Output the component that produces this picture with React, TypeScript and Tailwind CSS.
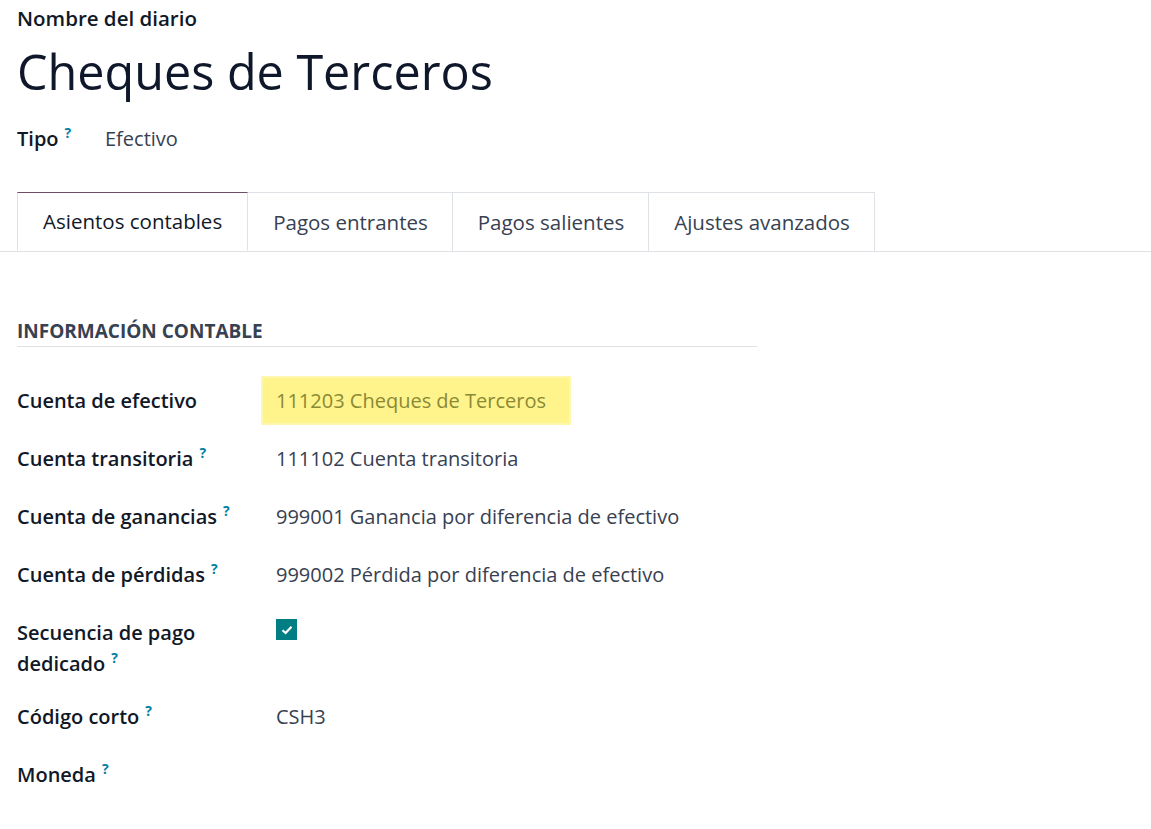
import React from 'react'

const font = { fontFamily: '"Open Sans", "Noto Sans", sans-serif' }

function Help() {
  return <sup className="ml-[6px] text-[14px] font-bold text-[#0180a5] relative -top-[8px]">?</sup>
}

const tabs = ['Asientos contables', 'Pagos entrantes', 'Pagos salientes', 'Ajustes avanzados']

interface RowProps {
  label: React.ReactNode
  help?: boolean
  children?: React.ReactNode
}

function Row({ label, help, children }: RowProps) {
  return (
    <div className="flex items-start min-h-[58px]">
      <div className="w-[259px] shrink-0 pr-4 text-[20px] leading-[31px] font-semibold text-[#111827]">
        {label}
        {help && <Help />}
      </div>
      <div className="flex-1 text-[20px] leading-[31px] text-[#374151]">{children}</div>
    </div>
  )
}

export default function App() {
  return (
    <div className="w-[1151px] h-[829px] bg-white overflow-hidden text-[#111827]" style={font}>
      <div className="pl-[17px] pt-[3px]">
        <div className="text-[20.5px] leading-[30px] font-semibold">Nombre del diario</div>
        <div className="text-[48.5px] leading-[68px] mt-[4px] text-[#0f172a]">Cheques de Terceros</div>
        <div className="flex items-center mt-[18px] h-[31px]">
          <div className="w-[88px] text-[20px] font-semibold">
            Tipo<Help />
          </div>
          <div className="text-[20px] text-[#374151]">Efectivo</div>
        </div>
      </div>

      {/* Tabs */}
      <div className="mt-[38px] flex border-b border-[#dee2e6] pl-[17px]">
        {tabs.map((t, i) => (
          <div
            key={t}
            className={
              i === 0
                ? 'h-[59px] px-[25px] flex items-center text-[20.5px] text-[#111827] bg-white border border-[#dee2e6] border-t-[#714b67] border-b-white -mb-px'
                : 'h-[59px] pl-[25px] pr-[24px] flex items-center text-[20.5px] text-[#374151] border-t border-r border-[#dee2e6]'
            }
          >
            {t}
          </div>
        ))}
      </div>

      <div className="pl-[17px] pt-[66px]">
        <div className="w-[740px] border-b border-[#dee2e6] pb-[2px] text-[19px] leading-[26px] font-bold text-[#374151]">
          INFORMACIÓN CONTABLE
        </div>

        <div className="mt-[38px]">
          <Row label="Cuenta de efectivo">
            <span className="-ml-[13px] -mt-[7px] inline-block pl-[13px] pr-[23px] py-[7px] bg-[#fff38c] text-[#8a8a35] ring-2 ring-[#fff6b0]">
              111203 Cheques de Terceros
            </span>
          </Row>
          <Row label="Cuenta transitoria" help>
            111102 Cuenta transitoria
          </Row>
          <Row label="Cuenta de ganancias" help>
            999001 Ganancia por diferencia de efectivo
          </Row>
          <Row label="Cuenta de pérdidas" help>
            999002 Pérdida por diferencia de efectivo
          </Row>
          <Row
            label={
              <>
                Secuencia de pago
                <br />
                dedicado
              </>
            }
            help
          >
            <div className="mt-[2px] w-[21px] h-[21px] bg-[#017e84] flex items-center justify-center">
              <svg width="12" height="10" viewBox="0 0 12 10" fill="none">
                <path d="M1.5 5.2 L4.6 8 L10.5 1.8" stroke="white" strokeWidth="2.2" />
              </svg>
            </div>
          </Row>
          <div className="h-[22px]" />
          <Row label="Código corto" help>
            CSH3
          </Row>
          <Row label="Moneda" help />
        </div>
      </div>
    </div>
  )
}
